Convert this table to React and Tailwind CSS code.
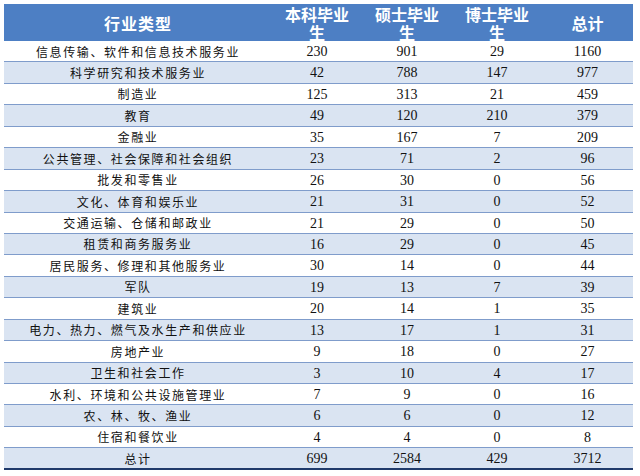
import React from "react";

const rows = [
  ["信息传输、软件和信息技术服务业", 230, 901, 29, 1160],
  ["科学研究和技术服务业", 42, 788, 147, 977],
  ["制造业", 125, 313, 21, 459],
  ["教育", 49, 120, 210, 379],
  ["金融业", 35, 167, 7, 209],
  ["公共管理、社会保障和社会组织", 23, 71, 2, 96],
  ["批发和零售业", 26, 30, 0, 56],
  ["文化、体育和娱乐业", 21, 31, 0, 52],
  ["交通运输、仓储和邮政业", 21, 29, 0, 50],
  ["租赁和商务服务业", 16, 29, 0, 45],
  ["居民服务、修理和其他服务业", 30, 14, 0, 44],
  ["军队", 19, 13, 7, 39],
  ["建筑业", 20, 14, 1, 35],
  ["电力、热力、燃气及水生产和供应业", 13, 17, 1, 31],
  ["房地产业", 9, 18, 0, 27],
  ["卫生和社会工作", 3, 10, 4, 17],
  ["水利、环境和公共设施管理业", 7, 9, 0, 16],
  ["农、林、牧、渔业", 6, 6, 0, 12],
  ["住宿和餐饮业", 4, 4, 0, 8],
  ["总计", 699, 2584, 429, 3712],
];

const cjk = { fontFamily: '"Noto Sans CJK SC", sans-serif' };
const num = { fontFamily: '"Liberation Serif", serif' };

export default function App() {
  return (
    <div className="w-[640px] h-[476px] bg-white pt-[4px] pl-[4px]">
      <div className="w-[629px]">
        {/* header */}
        <div
          className="grid grid-cols-[268px_90px_90px_90px_91px] h-[37px] bg-[#4d7fc4] text-white font-bold text-[16px] leading-[18px] text-center items-center"
          style={cjk}
        >
          <div className="tracking-[1px]">行业类型</div>
          <div>本科毕业<br />生</div>
          <div>硕士毕业<br />生</div>
          <div>博士毕业<br />生</div>
          <div>总计</div>
        </div>

        {/* body */}
        {rows.map((r, i) => (
          <div
            key={r[0]}
            className={
              "grid grid-cols-[268px_90px_90px_90px_91px] h-[21.45px] items-center text-center text-[#111] " +
              (i % 2 === 1 ? "bg-[#dae4f2] " : "bg-white ") +
              (i === rows.length - 1 ? "border-b-[2.5px] border-[#1f3a6b]" : "border-b-[1.5px] border-[#7f9ccb]")
            }
          >
            <div className="text-[12px] tracking-[1.6px]" style={cjk}>
              {r[0]}
            </div>
            {r.slice(1).map((v, j) => (
              <div key={j} className="text-[14px]" style={num}>
                {v}
              </div>
            ))}
          </div>
        ))}
      </div>
    </div>
  );
}
